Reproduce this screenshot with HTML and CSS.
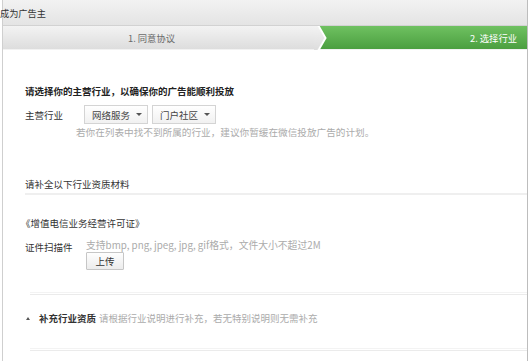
FILE: index.html
```html
<!DOCTYPE html>
<html lang="zh-CN">
<head>
<meta charset="utf-8">
<title>成为广告主</title>
<link rel="stylesheet" href="styles.css">
</head>
<body>
<div class="page">
  <div class="titlebar"><span class="title">成为广告主</span></div>
  <div class="steps">
    <div class="step step-done"><span>1. 同意协议</span></div>
    <div class="step step-current"><span>2. 选择行业</span></div>
    <svg class="chevron" width="14" height="24" viewBox="0 0 14 24">
      <defs>
        <linearGradient id="g" x1="0" y1="0" x2="0" y2="1">
          <stop offset="0" stop-color="#f3f3f3"/>
          <stop offset="1" stop-color="#dddddd"/>
        </linearGradient>
      </defs>
      <polygon points="0,0 4,0 11,12 4,24 0,24" fill="url(#g)"/>
      <polyline points="4,-1 11.5,12 4,25" fill="none" stroke="#ffffff" stroke-width="2"/>
    </svg>
  </div>
  <div class="content">
    <section class="sec-industry">
      <div class="lead">请选择你的主营行业，以确保你的广告能顺利投放</div>
      <div class="field">
        <span class="field-label">主营行业</span>
        <div class="selects">
          <div class="select">网络服务<i class="caret"></i></div>
          <div class="select">门户社区<i class="caret"></i></div>
        </div>
      </div>
      <p class="hint hint-indent">若你在列表中找不到所属的行业，建议你暂缓在微信投放广告的计划。</p>
    </section>
    <div class="sec-title">请补全以下行业资质材料</div>
    <section class="sec-cert">
      <div class="cert-name">《增值电信业务经营许可证》</div>
      <div class="field field-top">
        <span class="field-label">证件扫描件</span>
        <div class="upload">
          <p class="hint upload-hint">支持bmp, png, jpeg, jpg, gif格式，文件大小不超过2M</p>
          <button class="btn" type="button">上传</button>
        </div>
      </div>
    </section>
    <div class="divider"></div>
    <div class="extra">
      <i class="tri"></i><b class="extra-title">补充行业资质</b><span class="hint">请根据行业说明进行补充，若无特别说明则无需补充</span>
    </div>
    <div class="divider divider-last"></div>
  </div>
</div>
</body>
</html>
```

FILE: styles.css
```css
* { box-sizing: border-box; }
html, body { margin: 0; padding: 0; background: #fff; }
body {
  font-family: "Noto Sans CJK SC", "Noto Sans", sans-serif;
  font-size: 9.5px;
  color: #333;
  overflow: hidden;
}
.page {
  margin: 0 2px;
  min-height: 361px;
  border-left: 1px solid #cfcfcf;
  border-right: 1px solid #bdbdbd;
}
.titlebar {
  height: 26px;
  display: flex;
  align-items: center;
  background: linear-gradient(#f2f2f2, #e4e4e4);
  border-bottom: 1px solid #d2d2d2;
}
.title {
  margin-left: -3px;
  font-size: 9.2px;
  color: #333;
}
.steps {
  position: relative;
  display: flex;
  height: 24px;
  border-bottom: 1px solid #f2f2f2;
}
.step {
  display: flex;
  align-items: center;
  font-size: 9.3px;
}
.step-done {
  width: 311px;
  justify-content: center;
  padding-right: 14px;
  color: #6a6a6a;
  background: linear-gradient(#f3f3f3, #dddddd);
}
.step-current {
  flex: 1;
  justify-content: flex-end;
  padding-right: 10px;
  color: #fff;
  background: linear-gradient(#6fc161, #4b9f40);
}
.chevron {
  position: absolute;
  left: 311px;
  top: 0;
}
.content {
  padding: 34px 0 0 22px;
}
.lead {
  margin: 0 0 7px 0;
  font-size: 9.5px;
  line-height: 14px;
  font-weight: bold;
  color: #222;
}
.field {
  display: flex;
  align-items: center;
}
.field-top { align-items: flex-start; }
.field-label {
  width: 59px;
  line-height: 14px;
  color: #333;
}
.field-top .field-label { width: 57px; margin-top: 1px; }
.selects { display: flex; gap: 4px; }
.select {
  display: flex;
  align-items: center;
  justify-content: space-between;
  width: 64px;
  height: 19px;
  padding: 0 5px 0 7px;
  border: 1px solid #d4d4d4;
  background: linear-gradient(#ffffff, #f1f1f1);
  color: #444;
}
.caret {
  width: 0;
  height: 0;
  border-left: 3px solid transparent;
  border-right: 3px solid transparent;
  border-top: 3px solid #555;
}
.hint {
  margin: 0;
  line-height: 14px;
  color: #ababab;
}
.hint-indent { margin: 1px 0 0 51px; font-size: 9.65px; }
.sec-title {
  margin-top: 38px;
  padding: 0 0 2px 0;
  line-height: 14px;
  color: #333;
  border-bottom: 2px solid #efefef;
}
.sec-cert { padding-top: 21px; }
.cert-name {
  margin-left: -4px;
  line-height: 14px;
  color: #333;
  margin-bottom: 9px;
}
.upload { display: flex; flex-direction: column; align-items: flex-start; margin-left: 4px; }
.upload-hint { line-height: 12px; font-size: 9.8px; }
.btn {
  margin-top: 1px;
  width: 38px;
  height: 18px;
  padding: 0;
  font-family: inherit;
  font-size: 9.5px;
  color: #333;
  border: 1px solid #c6c6c6;
  border-radius: 1px;
  background: linear-gradient(#fefefe, #ececec);
}
.divider {
  margin: 22px 0 0 5px;
  height: 3px;
  border-top: 1px solid #f3f3f3;
  border-bottom: 1px solid #ebebeb;
}
.extra {
  display: flex;
  align-items: center;
  margin-top: 16px;
  padding-left: 1px;
  line-height: 14px;
}
.tri {
  width: 0;
  height: 0;
  border-left: 2.5px solid transparent;
  border-right: 2.5px solid transparent;
  border-bottom: 3px solid #555;
  margin-right: 9px;
}
.extra-title {
  font-weight: bold;
  color: #333;
  margin-right: 3px;
}
.divider-last { margin-top: 23px; }
```
